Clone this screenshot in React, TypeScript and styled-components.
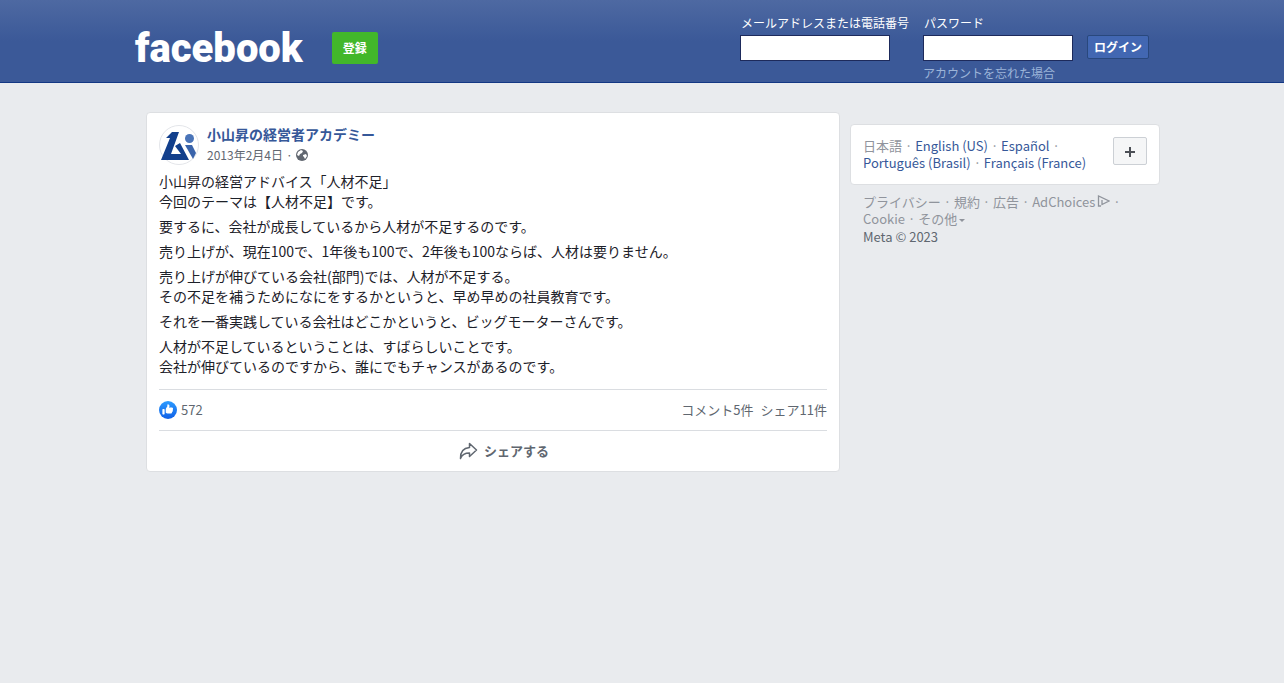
import React from 'react';
import styled, { createGlobalStyle } from 'styled-components';

const GlobalStyle = createGlobalStyle`
  *, *::before, *::after { box-sizing: border-box; }
  body {
    margin: 0;
    background: #e9ebee;
    color: #1d2129;
    font-family: "Noto Sans CJK JP", sans-serif;
    font-size: 13px;
    line-height: 18px;
  }
  a { text-decoration: none; }
  a:hover { text-decoration: underline; }
`;

const Header = styled.header`
  background: linear-gradient(#4e69a2, #3b5998 50%);
  border-bottom: 1px solid #133783;
  padding: 0 16px;
`;

const HeaderInner = styled.div`
  max-width: 1014px;
  height: 82px;
  margin: 0 auto;
  display: flex;
  justify-content: space-between;
`;

const Brand = styled.div`
  display: flex;
  align-items: center;
  gap: 29px;
  padding-top: 14px;
`;

const Logo = styled.a`
  color: #fff;
  font-family: Roboto, sans-serif;
  font-size: 40px;
  font-weight: 900;
  line-height: 44px;
  padding-top: 2px;
  &:hover { text-decoration: none; }
`;

const SignUpButton = styled.button`
  height: 32px;
  padding: 0 11px;
  border: 0;
  border-radius: 2px;
  background: #42b72a;
  color: #fff;
  font: bold 12px/30px "Noto Sans CJK JP", sans-serif;
`;

const LoginForm = styled.form`
  display: flex;
  align-items: flex-start;
  gap: 14px;
  padding-top: 14px;
`;

const Field = styled.div`
  display: flex;
  flex-direction: column;
  align-items: flex-start;
  font-size: 12px;
`;

const FieldLabel = styled.label`
  color: #fff;
  line-height: 18px;
  padding: 0 0 3px 1px;
`;

const FieldInput = styled.input`
  width: 150px;
  height: 26px;
  border: 1px solid #1d2a5b;
  background: #fff;
  padding: 3px;
`;

const ForgotLink = styled.a`
  color: #9cb4d8;
  line-height: 18px;
  padding-top: 3px;
`;

const LoginButton = styled.button`
  height: 24px;
  margin-top: 21px;
  padding: 0 6px;
  border: 1px solid #29487d;
  border-radius: 2px;
  background: #4267b2;
  color: #fff;
  font: bold 12px/20px "Noto Sans CJK JP", sans-serif;
`;

const Content = styled.main`
  max-width: 1036px;
  margin: 0 auto;
  padding: 29px 0 29px 22px;
  display: flex;
  align-items: flex-start;
  gap: 10px;
`;

const Card = styled.div`
  background: #fff;
  border: 1px solid #dddfe2;
  border-radius: 4px;
  padding: 12px;
`;

const Post = styled(Card).attrs({ as: 'article' })`
  flex: 1;
  min-width: 0;
  padding-bottom: 0;
`;

const PostHeader = styled.div`
  display: flex;
  gap: 8px;
`;

const Author = styled.a`
  display: block;
  color: #365899;
  font-size: 14px;
  font-weight: bold;
  line-height: 18px;
`;

const Meta = styled.div`
  display: flex;
  align-items: center;
  gap: 3px;
  padding-top: 2px;
  color: #616770;
  font-size: 12px;
  line-height: 20px;
`;

const PostBody = styled.div`
  padding: 6px 0 13px;
  font-size: 14px;
  line-height: 20px;
`;

const Paragraph = styled.p`
  margin: 0;
  & + & { margin-top: 5px; }
`;

const Stats = styled.div`
  display: flex;
  align-items: center;
  height: 42px;
  gap: 4px;
  border: solid #dadde1;
  border-width: 1px 0;
  color: #606770;
`;

const Counts = styled.div`
  display: flex;
  gap: 7px;
  margin-left: auto;
`;

const ShareButton = styled.button`
  display: flex;
  align-items: center;
  justify-content: center;
  gap: 6px;
  width: 100%;
  height: 40px;
  border: 0;
  padding: 0 0 0 22px;
  background: none;
  color: #606770;
  font: bold 13px/18px "Noto Sans CJK JP", sans-serif;
`;

const Side = styled.aside`
  width: 310px;
  padding-top: 12px;
`;

const LanguageCard = styled(Card)`
  display: flex;
  justify-content: space-between;
  align-items: flex-start;
  height: 61px;
`;

const Links = styled.div<{ $color: string }>`
  color: #90949c;
  line-height: 17px;
  a { color: ${(p) => p.$color}; }
`;

const MoreLanguages = styled.button`
  width: 34px;
  height: 28px;
  display: flex;
  align-items: center;
  justify-content: center;
  padding: 2px 0 0;
  border: 1px solid #ccd0d5;
  border-radius: 2px;
  background: #f5f6f7;
`;

const Footer = styled.footer`
  padding: 8px 13px;
`;

const Copyright = styled.div`
  color: #606770;
  line-height: 20px;
`;

const AdIcon = styled.svg`
  margin-left: 2px;
  vertical-align: 0;
`;

const Caret = styled.span`
  display: inline-block;
  margin-left: 2px;
  border: solid transparent;
  border-width: 3px 3px 0;
  border-top-color: #90949c;
  vertical-align: 2px;
`;

const paragraphs = [
  ['小山昇の経営アドバイス「人材不足」', '今回のテーマは【人材不足】です。'],
  ['要するに、会社が成長しているから人材が不足するのです。'],
  ['売り上げが、現在100で、1年後も100で、2年後も100ならば、人材は要りません。'],
  ['売り上げが伸びている会社(部門)では、人材が不足する。', 'その不足を補うためになにをするかというと、早め早めの社員教育です。'],
  ['それを一番実践している会社はどこかというと、ビッグモーターさんです。'],
  ['人材が不足しているということは、すばらしいことです。', '会社が伸びているのですから、誰にでもチャンスがあるのです。'],
];

const Avatar = () => (
  <svg width="40" height="40" viewBox="0 0 40 40" aria-hidden="true">
    <circle cx="20" cy="20" r="19.5" fill="#fff" stroke="#e3e5e9" />
    <path d="M7 13l6-6h7l-8 22h10l-6-8 5-3 9 17H2l9-22z" fill="#123f8c" />
    <circle cx="30.5" cy="13.5" r="4.5" fill="#4a74b8" />
    <path d="M26 20h7l4 8-3 6z" fill="#3a64ab" />
  </svg>
);

const Globe = () => (
  <svg width="12" height="12" viewBox="0 0 12 12" aria-hidden="true">
    <circle cx="6" cy="6" r="6" fill="#616770" />
    <path d="M2 3l3-2 2 1-1 2-2 1-1 2-2-1zM7 6l3-1 1 2-2 3-1-2-1-1z" fill="#fff" />
  </svg>
);

const Like = () => (
  <svg width="18" height="18" viewBox="0 0 16 16" aria-hidden="true">
    <defs>
      <linearGradient id="like" x1="0" y1="0" x2="0" y2="1">
        <stop stopColor="#2c9bff" />
        <stop offset="1" stopColor="#1060e6" />
      </linearGradient>
    </defs>
    <circle cx="8" cy="8" r="8" fill="url(#like)" />
    <path
      fill="#fff"
      d="M12.162 7.338c.176.123.338.245.338.674 0 .43-.229.604-.474.725.1.163.132.36.089.546-.077.344-.392.611-.672.69.121.194.159.385.015.62-.185.295-.346.407-1.058.407H7.5c-.988 0-1.5-.546-1.5-1V7.665c0-1.23 1.467-2.275 1.467-3.13L7.361 3.47c-.005-.065.008-.224.058-.27.08-.079.301-.2.635-.2.218 0 .363.041.534.123.581.277.732.978.732 1.542 0 .271-.414 1.083-.47 1.364 0 0 .867-.192 1.879-.199 1.061-.006 1.749.19 1.749.842 0 .261-.219.523-.316.666zM3.6 7h.8a.6.6 0 01.6.6v3.8a.6.6 0 01-.6.6h-.8a.6.6 0 01-.6-.6V7.6a.6.6 0 01.6-.6z"
    />
  </svg>
);

const ShareArrow = () => (
  <svg width="19" height="18" viewBox="0 0 19 18" fill="none" stroke="#606770" strokeWidth="1.5" strokeLinejoin="round" aria-hidden="true">
    <path d="M10.5 1.5L17.5 8l-7 6.500V11C6 11 3 12.500 1.500 16.500 1.300 10 4.500 6 10.500 5.500z" />
  </svg>
);

export default function App() {
  return (
    <>
      <GlobalStyle />
      <Header>
        <HeaderInner>
          <Brand>
            <Logo href="#">facebook</Logo>
            <SignUpButton type="button">登録</SignUpButton>
          </Brand>
          <LoginForm>
            <Field>
              <FieldLabel htmlFor="email">メールアドレスまたは電話番号</FieldLabel>
              <FieldInput id="email" type="text" />
            </Field>
            <Field>
              <FieldLabel htmlFor="pass">パスワード</FieldLabel>
              <FieldInput id="pass" type="password" />
              <ForgotLink href="#">アカウントを忘れた場合</ForgotLink>
            </Field>
            <LoginButton type="button">ログイン</LoginButton>
          </LoginForm>
        </HeaderInner>
      </Header>
      <Content>
        <Post>
          <PostHeader>
            <Avatar />
            <div>
              <Author href="#">小山昇の経営者アカデミー</Author>
              <Meta>
                <span>2013年2月4日</span>
                <span>·</span>
                <Globe />
              </Meta>
            </div>
          </PostHeader>
          <PostBody>
            {paragraphs.map((lines) => (
              <Paragraph key={lines[0]}>
                {lines.map((line, i) => (
                  <React.Fragment key={line}>
                    {i > 0 && <br />}
                    {line}
                  </React.Fragment>
                ))}
              </Paragraph>
            ))}
          </PostBody>
          <Stats>
            <Like />
            <span>572</span>
            <Counts>
              <span>コメント5件</span>
              <span>シェア11件</span>
            </Counts>
          </Stats>
          <ShareButton type="button">
            <ShareArrow />
            シェアする
          </ShareButton>
        </Post>
        <Side>
          <LanguageCard>
            <Links $color="#365899">
              日本語 · <a href="#">English (US)</a> · <a href="#">Español</a> ·<br />
              <a href="#">Português (Brasil)</a> · <a href="#">Français (France)</a>
            </Links>
            <MoreLanguages type="button" aria-label="その他の言語">
              <svg width="10" height="10" viewBox="0 0 10 10" stroke="#4b4f56" strokeWidth="2" aria-hidden="true">
                <path d="M5 0v10M0 5h10" />
              </svg>
            </MoreLanguages>
          </LanguageCard>
          <Footer>
            <Links $color="#90949c">
              <a href="#">プライバシー</a> · <a href="#">規約</a> · <a href="#">広告</a> ·{' '}
              <a href="#">
                AdChoices
                <AdIcon width="13" height="12" viewBox="0 0 13 12" fill="none" stroke="#90949c" strokeWidth="1.3" aria-hidden="true">
                  <path d="M4 11H1.500V1L12 6l-7 3.500V5" />
                </AdIcon>
              </a>{' '}
              ·<br />
              <a href="#">Cookie</a> · <a href="#">その他<Caret /></a>
            </Links>
            <Copyright>Meta © 2023</Copyright>
          </Footer>
        </Side>
      </Content>
    </>
  );
}
